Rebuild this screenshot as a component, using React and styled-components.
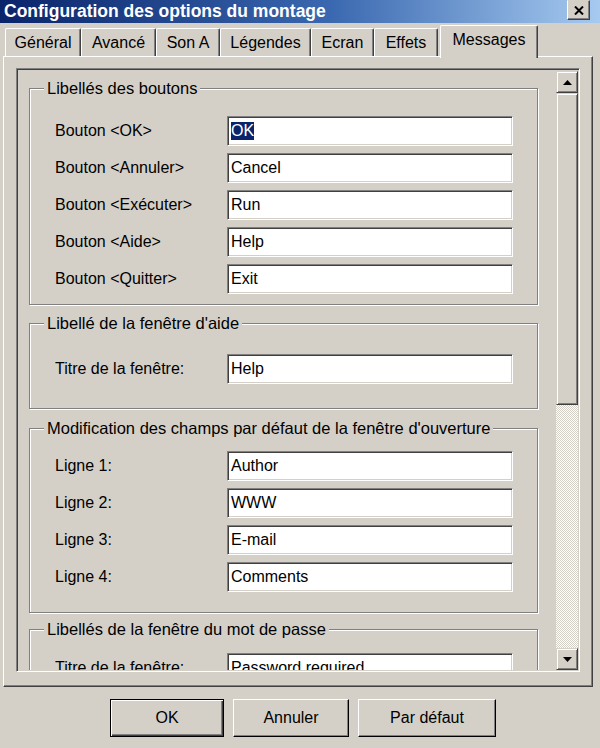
import React from "react";
import styled, { createGlobalStyle } from "styled-components";

const FONT = `"Liberation Sans", Arial, sans-serif`;

const Global = createGlobalStyle`
  html, body { margin: 0; padding: 0; background: #d4d0c8; }
  body { font-family: ${FONT}; }
`;

const Window = styled.div`
  width: 600px;
  height: 748px;
  background: #d4d0c8;
  display: flex;
  flex-direction: column;
  overflow: hidden;
  font-family: ${FONT};
  font-size: 16px;
  color: #000;
`;

const TitleBar = styled.div`
  flex: none;
  height: 23px;
  display: flex;
  align-items: flex-start;
  justify-content: space-between;
  padding: 0 10px 0 4px;
  background: linear-gradient(90deg, #0a246a 0%, #3a68b0 55%, #a6caf0 100%);
`;

const Title = styled.div`
  color: #fff;
  font-weight: bold;
  font-size: 17.5px;
  line-height: 22px;
  white-space: nowrap;
`;

const CloseButton = styled.div`
  width: 23px;
  height: 20px;
  box-sizing: border-box;
  background: #d4d0c8;
  border: 1px solid;
  border-color: #d4d0c8 #404040 #404040 #fff;
  box-shadow: inset -1px -1px 0 #808080;
  display: flex;
  align-items: center;
  justify-content: center;
`;

const TabRow = styled.div`
  flex: none;
  height: 33px;
  display: flex;
  align-items: flex-end;
  padding-left: 5px;
  position: relative;
  z-index: 2;
`;

const Tab = styled.div`
  box-sizing: border-box;
  width: ${(p) => p.$w}px;
  height: ${(p) => (p.$active ? 33 : 28)}px;
  margin-bottom: ${(p) => (p.$active ? -2 : 0)}px;
  margin-left: ${(p) => (p.$active ? 2 : 0)}px;
  background: #d4d0c8;
  border-top: 1px solid #fff;
  border-left: 1px solid #fff;
  border-right: 1px solid #404040;
  box-shadow: inset -1px 0 0 #808080;
  border-radius: 2px 2px 0 0;
  display: flex;
  align-items: center;
  justify-content: center;
  padding-bottom: ${(p) => (p.$active ? 4 : 0)}px;
  white-space: nowrap;
`;

const Panel = styled.div`
  flex: none;
  box-sizing: border-box;
  height: 631px;
  margin: 0 7px 0 3px;
  border: 1px solid;
  border-color: #fff #404040 #404040 #fff;
  box-shadow: inset -1px -1px 0 #808080;
  padding: 11px 12px 14px 12px;
  display: flex;
`;

const Viewport = styled.div`
  flex: 1;
  display: flex;
  min-height: 0;
  border: 1px solid;
  border-color: #808080 #fff #fff #808080;
  box-shadow: inset 1px 1px 0 #404040, inset -1px -1px 0 #d4d0c8;
  padding: 1px;
`;

const ScrollContent = styled.div`
  flex: 1;
  overflow: hidden;
  padding: 8px 0 0 11px;
`;

const Group = styled.fieldset`
  box-sizing: border-box;
  width: 509px;
  margin: ${(p) => p.$mt || 0}px 0 0 0;
  padding: ${(p) => p.$pt}px 0 ${(p) => p.$pb}px 0;
  border: 1px solid #808080;
  box-shadow: 1px 1px 0 #fff, inset 1px 1px 0 #fff;
  min-width: 0;
  display: flex;
  flex-direction: column;
  gap: 7px;
`;

const Legend = styled.legend`
  margin-left: 14px;
  padding: 0 3px;
  line-height: 20px;
  font-size: 16.5px;
  background: #d4d0c8;
  white-space: nowrap;
`;

const Row = styled.div`
  display: flex;
  align-items: center;
  height: 30px;
  padding-left: 25px;
`;

const Label = styled.div`
  width: 172px;
  flex: none;
  white-space: nowrap;
`;

const Field = styled.div`
  box-sizing: border-box;
  width: 286px;
  height: 30px;
  flex: none;
  background: #fff;
  border: 1px solid;
  border-color: #808080 #fff #fff #808080;
  box-shadow: inset 1px 1px 0 #404040, inset -1px -1px 0 #d4d0c8;
  padding: 0 3px;
  display: flex;
  align-items: center;
  white-space: nowrap;
`;

const Selected = styled.span`
  background: #0a246a;
  color: #fff;
`;

const Scrollbar = styled.div`
  width: 22px;
  flex: none;
  margin-top: 1px;
  display: flex;
  flex-direction: column;
`;

const raised = `
  box-sizing: border-box;
  background: #d4d0c8;
  border: 1px solid;
  border-color: #d4d0c8 #404040 #404040 #d4d0c8;
  box-shadow: inset 1px 1px 0 #fff, inset -1px -1px 0 #808080;
`;

const ArrowButton = styled.div`
  ${raised}
  height: 22px;
  flex: none;
  display: flex;
  align-items: center;
  justify-content: center;
`;

const Thumb = styled.div`
  ${raised}
  height: ${(p) => p.$h}px;
  flex: none;
`;

const Track = styled.div`
  flex: 1;
  background-color: #fff;
  background-image: conic-gradient(#d4d0c8 25%, #fff 0 50%, #d4d0c8 0 75%, #fff 0);
  background-size: 2px 2px;
`;

const ButtonRow = styled.div`
  display: flex;
  gap: 9px;
  padding-left: 110px;
  margin-top: 12px;
`;

const Button = styled.div`
  box-sizing: border-box;
  width: ${(p) => p.$w}px;
  height: 38px;
  background: #d4d0c8;
  border: 1px solid ${(p) => (p.$default ? "#000" : "#fff")};
  border-right-color: #000;
  border-bottom-color: #000;
  box-shadow: ${(p) =>
    p.$default
      ? "inset 1px 1px 0 #fff, inset -1px -1px 0 #404040, inset -2px -2px 0 #808080"
      : "inset -1px -1px 0 #808080"};
  display: flex;
  align-items: center;
  justify-content: center;
`;

const tabs = [
  ["Général", 76],
  ["Avancé", 75],
  ["Son A", 64],
  ["Légendes", 91],
  ["Ecran", 63],
  ["Effets", 64],
];

const groups = [
  {
    title: "Libellés des boutons",
    mt: 0,
    pt: 18,
    pb: 10,
    rows: [
      ["Bouton <OK>", "OK", true],
      ["Bouton <Annuler>", "Cancel"],
      ["Bouton <Exécuter>", "Run"],
      ["Bouton <Aide>", "Help"],
      ["Bouton <Quitter>", "Exit"],
    ],
  },
  {
    title: "Libellé de la fenêtre d'aide",
    mt: 8,
    pt: 21,
    pb: 24,
    rows: [["Titre de la fenêtre:", "Help"]],
  },
  {
    title: "Modification des champs par défaut de la fenêtre d'ouverture",
    mt: 9,
    pt: 13,
    pb: 20,
    rows: [
      ["Ligne 1:", "Author"],
      ["Ligne 2:", "WWW"],
      ["Ligne 3:", "E-mail"],
      ["Ligne 4:", "Comments"],
    ],
  },
  {
    title: "Libellés de la fenêtre du mot de passe",
    mt: 6,
    pt: 14,
    pb: 10,
    rows: [["Titre de la fenêtre:", "Password required"]],
  },
];

const Arrow = ({ up }) => (
  <svg width="9" height="5" viewBox="0 0 9 5">
    <path d={up ? "M4.5 0 L9 5 L0 5 Z" : "M0 0 L9 0 L4.5 5 Z"} fill="#000" />
  </svg>
);

export default function App() {
  return (
    <Window>
      <Global />
      <TitleBar>
        <Title>Configuration des options du montage</Title>
        <CloseButton>
          <svg width="10" height="9" viewBox="0 0 10 9">
            <path d="M1 0.5 L9 8.5 M9 0.5 L1 8.5" stroke="#000" strokeWidth="2" />
          </svg>
        </CloseButton>
      </TitleBar>
      <TabRow>
        {tabs.map(([name, w]) => (
          <Tab key={name} $w={w}>
            {name}
          </Tab>
        ))}
        <Tab $w={98} $active>
          Messages
        </Tab>
      </TabRow>
      <Panel>
        <Viewport>
          <ScrollContent>
            {groups.map((g) => (
              <Group key={g.title} $mt={g.mt} $pt={g.pt} $pb={g.pb}>
                <Legend>{g.title}</Legend>
                {g.rows.map(([label, value, sel]) => (
                  <Row key={label}>
                    <Label>{label}</Label>
                    <Field>{sel ? <Selected>{value}</Selected> : value}</Field>
                  </Row>
                ))}
              </Group>
            ))}
          </ScrollContent>
          <Scrollbar>
            <ArrowButton>
              <Arrow up />
            </ArrowButton>
            <Thumb $h={312} />
            <Track />
            <ArrowButton>
              <Arrow />
            </ArrowButton>
          </Scrollbar>
        </Viewport>
      </Panel>
      <ButtonRow>
        <Button $w={114} $default>
          OK
        </Button>
        <Button $w={116}>Annuler</Button>
        <Button $w={138}>Par défaut</Button>
      </ButtonRow>
    </Window>
  );
}
